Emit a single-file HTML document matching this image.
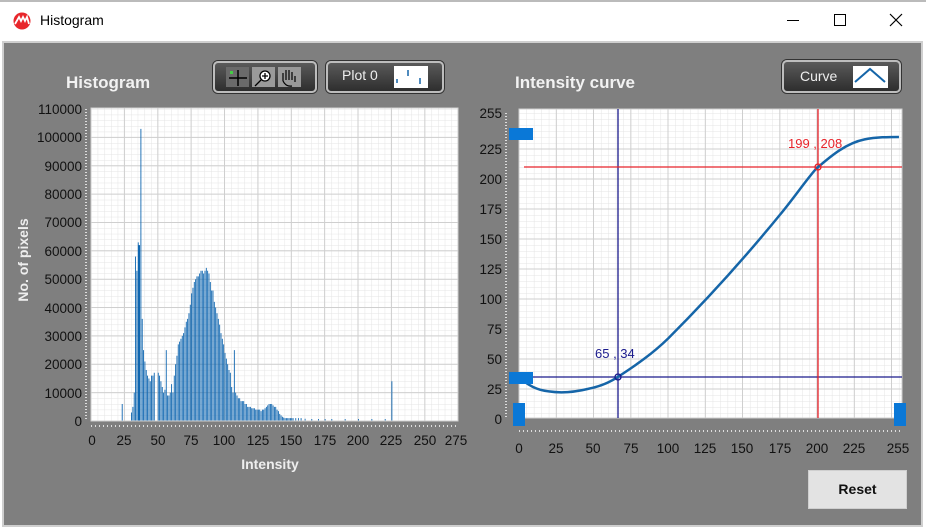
<!DOCTYPE html>
<html><head><meta charset="utf-8">
<style>
*{margin:0;padding:0;box-sizing:border-box}
body{width:926px;height:529px;overflow:hidden;background:#fff;font-family:"Liberation Sans",sans-serif;position:relative}
.abs{position:absolute}
.title{left:40px;top:12px;font-size:14px;color:#000}
.body{left:2px;top:41px;width:921px;height:486px;background:#7f7f7f;border:2px solid #cfcfcf;}
.h{font-weight:bold;color:#f2f2f2;font-size:17px}
.btn{background:linear-gradient(#5a5a5a,#2e2e2e);border:2px solid #bdbdbd;border-radius:5px;box-shadow:0 0 0 1px #333}
</style></head><body>
<div class="abs" style="left:0;top:0;width:926px;height:2px;background:#bbb"></div>
<svg class="abs" style="left:12px;top:12px" width="20" height="18" viewBox="0 0 20 18"><circle cx="10" cy="9" r="8.5" fill="#e8262b"/><path d="M3 12 L7 5 L9 9 L11 5 L13 9 L15 5 L17 12" stroke="#fff" stroke-width="1.8" fill="none"/></svg>
<div class="abs title">Histogram</div>
<div class="abs" style="left:787px;top:20px;width:12px;height:1px;background:#000"></div>
<div class="abs" style="left:834px;top:14px;width:12px;height:12px;border:1px solid #000"></div>
<svg class="abs" style="left:889px;top:13px" width="14" height="14"><path d="M1 1L13 13M13 1L1 13" stroke="#000" stroke-width="1.2"/></svg>
<div class="abs body"></div>

<div class="abs h" style="left:66px;top:73px">Histogram</div>
<div class="abs h" style="left:515px;top:73px">Intensity curve</div>

<div class="abs btn" style="left:213px;top:61px;width:104px;height:32px"></div>
<div class="abs" style="left:226px;top:67px;width:23px;height:20px;background:#6a6a6a"></div>
<svg class="abs" style="left:226px;top:67px" width="80" height="20"><path d="M3 11H21M12 3V19" stroke="#000" stroke-width="1.5"/><rect x="4" y="4" width="3" height="3" fill="#4c4"/><rect x="26" y="0" width="23" height="20" fill="#9a9a9a"/><circle cx="39" cy="9" r="5" fill="#fff" stroke="#000" stroke-width="1.3"/><path d="M35 13L29 19M36 9h6M39 6v6" stroke="#000" stroke-width="1.3"/><rect x="52" y="0" width="23" height="20" fill="#9a9a9a"/><path d="M57 14V6M60 13V3M63 13V3M66 13V5M69 15V9M57 14Q60 20 66 19" stroke="#000" stroke-width="1.2" fill="none"/></svg>
<div class="abs btn" style="left:326px;top:61px;width:118px;height:32px"></div>
<div class="abs" style="left:342px;top:67px;color:#eee;font-size:14px">Plot 0</div>
<div class="abs" style="left:394px;top:66px;width:34px;height:22px;background:#fff"></div>
<svg class="abs" style="left:394px;top:66px" width="34" height="22"><path d="M3 13v4M14 4v6M26 12v6" stroke="#1565a8" stroke-width="1.5"/></svg>
<div class="abs btn" style="left:782px;top:60px;width:119px;height:33px"></div>
<div class="abs" style="left:800px;top:68px;color:#eee;font-size:14px">Curve</div>
<div class="abs" style="left:853px;top:66px;width:35px;height:22px;background:#fff"></div>
<svg class="abs" style="left:853px;top:66px" width="35" height="22"><path d="M2 16L17 3L32 16" stroke="#1565a8" stroke-width="2" fill="none"/></svg>

<svg class="abs" style="left:0;top:0" width="926" height="529">
<defs>
<pattern id="g1" x="91" y="109" width="6.675" height="5.673" patternUnits="userSpaceOnUse"><path d="M0 0V6M0 0H7" stroke="#e4e4e4" stroke-width="1" fill="none"/></pattern>
<pattern id="g2" x="519" y="113" width="7.45" height="6" patternUnits="userSpaceOnUse"><path d="M0 0V6M0 0H8" stroke="#e4e4e4" stroke-width="1" fill="none"/></pattern>
</defs>
<rect x="91" y="108" width="367" height="313" fill="#fff"/>
<rect x="91" y="108" width="367" height="313" fill="url(#g1)"/>
<g stroke="#cfcfcf" stroke-width="1">
<path d="M124.4 108V421M157.8 108V421M191.1 108V421M224.5 108V421M257.9 108V421M291.3 108V421M324.6 108V421M358 108V421M391.4 108V421M424.8 108V421"/>
<path d="M91 137.4H458M91 165.7H458M91 194.1H458M91 222.5H458M91 250.8H458M91 279.2H458M91 307.5H458M91 335.9H458M91 364.3H458M91 392.6H458"/>
</g>
<g transform="translate(91.5,421) scale(1.335,-0.002836)">
<path vector-effect="non-scaling-stroke" stroke="#0f66b0" stroke-width="0.9" fill="none" d="M0 0H22M23 0v6000M24 0H29M30 0v3000M31 0v5000M32 0v10000M33 0v58000M34 0v53000M35 0v63000M35.5 0v62000M36 0v62000M37 0v103000M38 0v36000M39 0v25000M40 0v21000M41 0v18000M42 0v16000M43 0v15000M44 0v14000M45 0v16000M46 0v16000M47 0v17000M50 0v17000M51 0v16000M52 0v14000M53 0v12000M54 0v10000M55 0v11000M56 0v25000M57 0v9000M58 0v9000M59 0v10000M60 0v13000M61 0v10000M62 0v16000M63 0v20000M64 0v23000M65 0v27000M66 0v28000M67 0v29000M68 0v30000M69 0v31000M70 0v33000M71 0v35000M72 0v36000M73 0v38000M74 0v41000M75 0v45000M76 0v47000M77 0v49000M78 0v50000M79 0v51000M80 0v51000M81 0v52000M82 0v53000M83 0v53000M84 0v52000M85 0v53000M86 0v54000M87 0v53000M88 0v52000M89 0v49000M90 0v46000M91 0v46000M92 0v42000M93 0v40000M94 0v38000M95 0v36000M96 0v34000M97 0v31000M98 0v29000M99 0v27000M100 0v24000M101 0v22000M102 0v20000M103 0v18000M104 0v17000M105 0v12000M106 0v10000M107 0v25000M108 0v10000M109 0v9000M110 0v8000M111 0v8000M112 0v7000M113 0v7000M114 0v7000M115 0v6000M116 0v6000M117 0v5000M118 0v5000M119 0v5000M120 0v4500M121 0v4500M122 0v4500M123 0v4000M124 0v4000M125 0v4000M126 0v4000M127 0v3500M128 0v4000M129 0v4000M130 0v4500M131 0v5000M132 0v5500M133 0v6000M134 0v6000M135 0v6000M136 0v5500M137 0v5000M138 0v5000M139 0v4000M140 0v3500M141 0v2500M142 0v2000M143 0v1500M144 0v1200M145 0v1000M146 0v1000M147 0v1000M148 0v1000M149 0v1000M150 0v1000M151 0v1000M153 0v1000M155 0v1000M157 0v1000M160 0v800M165 0v700M170 0v700M175 0v700M180 0v700M190 0v700M200 0v700M210 0v700M220 0v700M225 0v14000M151 0H255"/>
</g>
<rect x="91" y="108" width="367" height="313" fill="none" stroke="#cfcfcf"/>
<path d="M86 109V421" stroke="#ddd" stroke-width="2" stroke-dasharray="1 2"/>
<path d="M91 426H458" stroke="#ddd" stroke-width="2" stroke-dasharray="1 3"/>

<rect x="519" y="109" width="383" height="309" fill="#fff"/>
<rect x="519" y="109" width="383" height="309" fill="url(#g2)"/>
<g stroke="#cfcfcf" stroke-width="1">
<path d="M556.3 109V418M593.5 109V418M630.8 109V418M668 109V418M705.3 109V418M742.5 109V418M779.8 109V418M817 109V418M854.3 109V418M891.5 109V418"/>
<path d="M519 149H902M519 179H902M519 209H902M519 239H902M519 269H902M519 299H902M519 329H902M519 359H902M519 389H902"/>
</g>
<rect x="519" y="109" width="383" height="309" fill="none" stroke="#cfcfcf"/>
<path d="M618 109V418M524 377H902" stroke="#1a1a8c" stroke-width="1.3"/>
<path d="M818 109V418M524 167H902" stroke="#e8232a" stroke-width="1.3"/>
<g transform="translate(519,419) scale(1.49,-1.2)">
<path vector-effect="non-scaling-stroke" stroke="#1565a8" stroke-width="2.5" fill="none" d="M0 35C6 28 12 24 20 23C28 21.5 36 22 46 25C54 27 60 30 65 34C80 46 90 55 100 67C125 98 150 132 175 170C185 185 192 198 199 208C210 220 220 230 232 233C240 235 248 235 255 235"/>
</g>
<circle cx="618" cy="377" r="3" fill="none" stroke="#1a1a8c" stroke-width="1.3"/>
<circle cx="818" cy="167" r="3" fill="none" stroke="#e8232a" stroke-width="1.3"/>
<text x="595" y="358" font-size="13" fill="#1a1a8c" font-family="Liberation Sans">65 , 34</text>
<text x="788" y="148" font-size="13" fill="#e8232a" font-family="Liberation Sans">199 , 208</text>
<path d="M506 113V419" stroke="#ddd" stroke-width="2" stroke-dasharray="1 2"/>
<path d="M519 431H902" stroke="#ddd" stroke-width="2" stroke-dasharray="1 3"/>
<rect x="509" y="128" width="24" height="12" fill="#0a78d7"/>
<rect x="509" y="372" width="24" height="12" fill="#0a78d7"/>
<rect x="513" y="403" width="12" height="23" fill="#0a78d7"/>
<rect x="894" y="403" width="12" height="23" fill="#0a78d7"/>

<g font-family="Liberation Sans" font-size="13.5" fill="#111" text-anchor="end">
<text x="82" y="114">110000</text><text x="82" y="142">100000</text><text x="82" y="171">90000</text><text x="82" y="199">80000</text><text x="82" y="227">70000</text><text x="82" y="256">60000</text><text x="82" y="284">50000</text><text x="82" y="313">40000</text><text x="82" y="341">30000</text><text x="82" y="369">20000</text><text x="82" y="398">10000</text><text x="82" y="426">0</text>
<text x="502" y="118">255</text><text x="502" y="154">225</text><text x="502" y="184">200</text><text x="502" y="214">175</text><text x="502" y="244">150</text><text x="502" y="274">125</text><text x="502" y="304">100</text><text x="502" y="334">75</text><text x="502" y="364">50</text><text x="502" y="394">25</text><text x="502" y="424">0</text>
</g>
<g font-family="Liberation Sans" font-size="13.5" fill="#111" text-anchor="middle">
<text x="92" y="445">0</text><text x="124" y="445">25</text><text x="158" y="445">50</text><text x="191" y="445">75</text><text x="224" y="445">100</text><text x="258" y="445">125</text><text x="291" y="445">150</text><text x="325" y="445">175</text><text x="358" y="445">200</text><text x="391" y="445">225</text><text x="425" y="445">250</text><text x="456" y="445">275</text>
<text x="519" y="453">0</text><text x="556" y="453">25</text><text x="593" y="453">50</text><text x="631" y="453">75</text><text x="668" y="453">100</text><text x="705" y="453">125</text><text x="742" y="453">150</text><text x="780" y="453">175</text><text x="817" y="453">200</text><text x="854" y="453">225</text><text x="898" y="453">255</text>
</g>
<text x="270" y="469" text-anchor="middle" font-family="Liberation Sans" font-weight="bold" font-size="14" fill="#eee">Intensity</text>
<text transform="translate(28,260) rotate(-90)" text-anchor="middle" font-family="Liberation Sans" font-weight="bold" font-size="14" fill="#eee">No. of pixels</text>
</svg>

<div class="abs" style="left:808px;top:470px;width:99px;height:39px;background:#e3e3e3;border:1px solid #cfcfcf;text-align:center;line-height:37px;font-weight:bold;font-size:14px;color:#111">Reset</div>
</body></html>
